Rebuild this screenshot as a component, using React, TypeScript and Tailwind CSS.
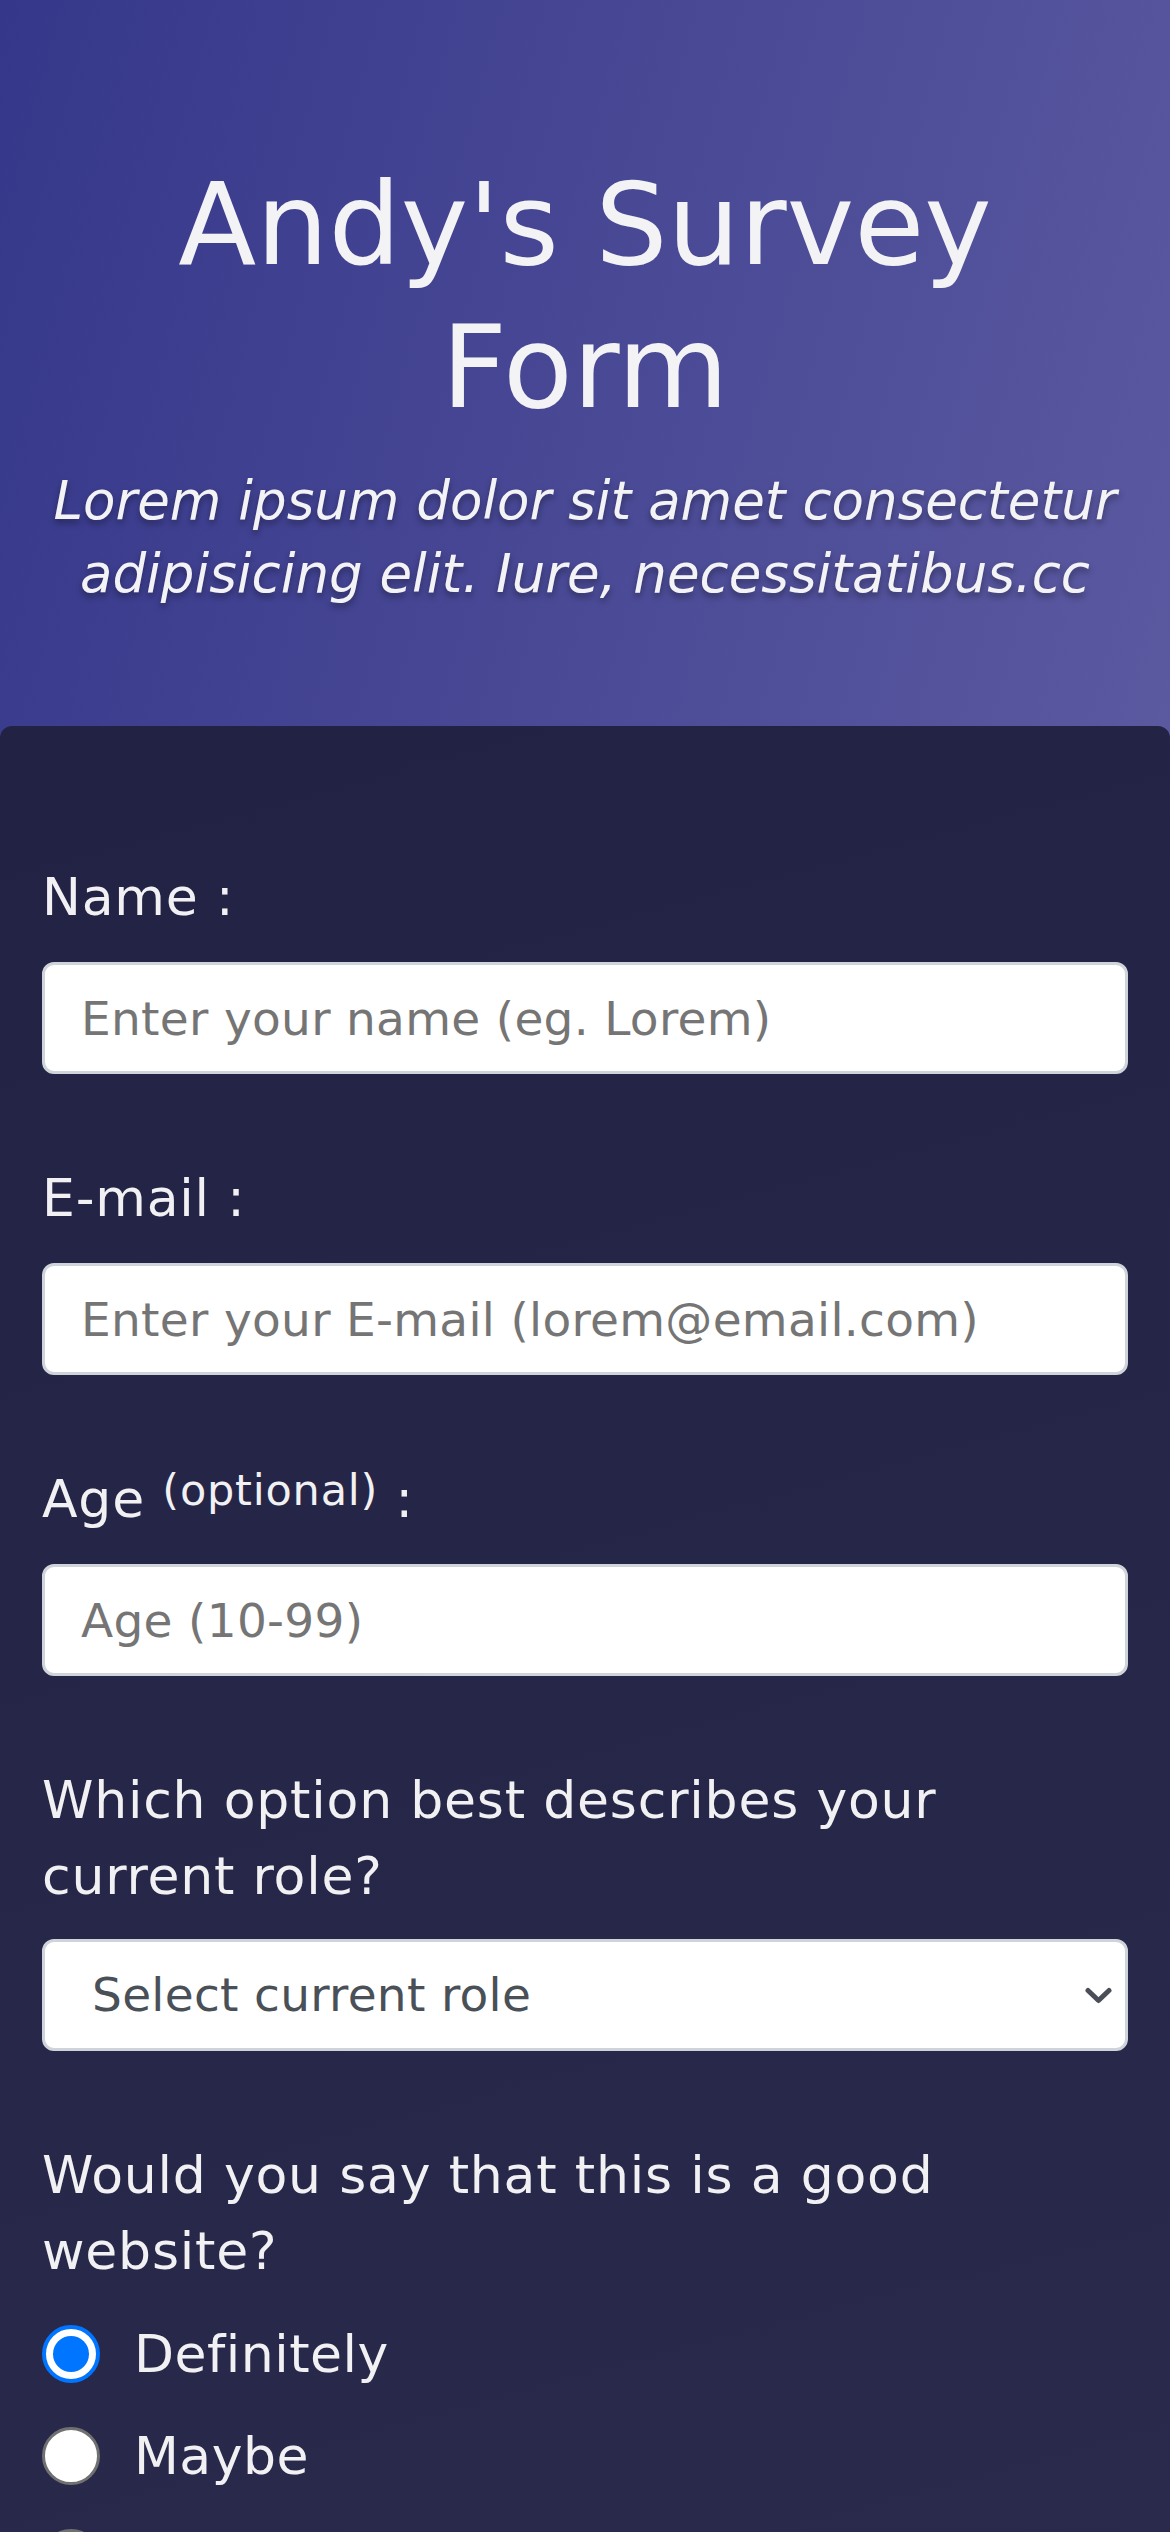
import React from "react";

const labelCls =
  "block text-[52px] leading-[76px] tracking-[0.8px] text-[#f1f1f3] font-normal";
const inputCls =
  "mt-[27px] block w-full h-[112px] rounded-[12px] border-[3px] border-[#ced4da] bg-white px-[36px] text-[47px] tracking-[0.3px] text-[#495057] placeholder:text-[#757575] outline-none";

function Radio({ checked, label }: { checked?: boolean; label: string }) {
  return (
    <label className="flex items-center gap-[34px] text-[52px] leading-[76px] tracking-[0.5px] text-[#f1f1f3]">
      {checked ? (
        <span className="flex h-[58px] w-[58px] shrink-0 items-center justify-center rounded-full border-[4px] border-[#0075ff] bg-white">
          <span className="h-[36px] w-[36px] rounded-full bg-[#0075ff]" />
        </span>
      ) : (
        <span className="h-[58px] w-[58px] shrink-0 rounded-full border-[3px] border-[#707070] bg-white" />
      )}
      <span>{label}</span>
    </label>
  );
}

export default function App() {
  return (
    <div className="min-h-screen bg-[#26264a] bg-[linear-gradient(105deg,#35378a,#5b59a0)] bg-no-repeat bg-[length:100%_760px] font-['DejaVu_Sans',sans-serif]">
      <header className="px-[20px] pt-[153px] pb-[116px] text-center text-[#f3f3f5]">
        <h1 className="text-[114px] leading-[143px] font-normal">
          Andy's Survey
          <br />
          Form
        </h1>
        <p className="mt-[25px] text-[53px] leading-[73px] italic font-light [text-shadow:0_4px_6px_rgba(0,0,0,0.35)]">
          Lorem ipsum dolor sit amet consectetur
          <br />
          adipisicing elit. Iure, necessitatibus.cc
        </p>
      </header>

      <main className="rounded-t-[12px] bg-[linear-gradient(165deg,#222245,#2b2b4d)] px-[42px] pt-[133px] pb-[300px]">
        <form className="flex flex-col gap-[86px]">
          <div>
            <label className={labelCls} htmlFor="name">
              Name :
            </label>
            <input
              id="name"
              type="text"
              className={inputCls}
              placeholder="Enter your name (eg. Lorem)"
            />
          </div>

          <div>
            <label className={labelCls} htmlFor="email">
              E-mail :
            </label>
            <input
              id="email"
              type="email"
              className={inputCls}
              placeholder="Enter your E-mail (lorem@email.com)"
            />
          </div>

          <div>
            <label className={labelCls} htmlFor="age">
              Age{" "}
              <sup className="text-[43px] leading-none top-[-12px]">
                (optional)
              </sup>{" "}
              :
            </label>
            <input
              id="age"
              type="text"
              className={inputCls}
              placeholder="Age (10-99)"
            />
          </div>

          <div>
            <label className={`${labelCls} leading-[75px]`}>
              Which option best describes your
              <br />
              current role?
            </label>
            <div className="mt-[25px] flex h-[112px] w-full items-center justify-between rounded-[12px] border-[3px] border-[#ced4da] bg-white pl-[47px] pr-[13px] text-[47px] tracking-[0.3px] text-[#495057]">
              <span>Select current role</span>
              <svg
                width="27"
                height="17"
                viewBox="0 0 27 17"
                fill="none"
                aria-hidden="true"
              >
                <path
                  d="M3 3.5 L13.5 13.5 L24 3.5"
                  stroke="#4a4f57"
                  strokeWidth="5"
                  strokeLinecap="round"
                  strokeLinejoin="round"
                />
              </svg>
            </div>
          </div>

          <div>
            <label className={labelCls}>
              Would you say that this is a good
              <br />
              website?
            </label>
            <div className="mt-[27px] flex flex-col gap-[26px]">
              <Radio checked label="Definitely" />
              <Radio label="Maybe" />
              <Radio label="Not sure" />
            </div>
          </div>
        </form>
      </main>
    </div>
  );
}
